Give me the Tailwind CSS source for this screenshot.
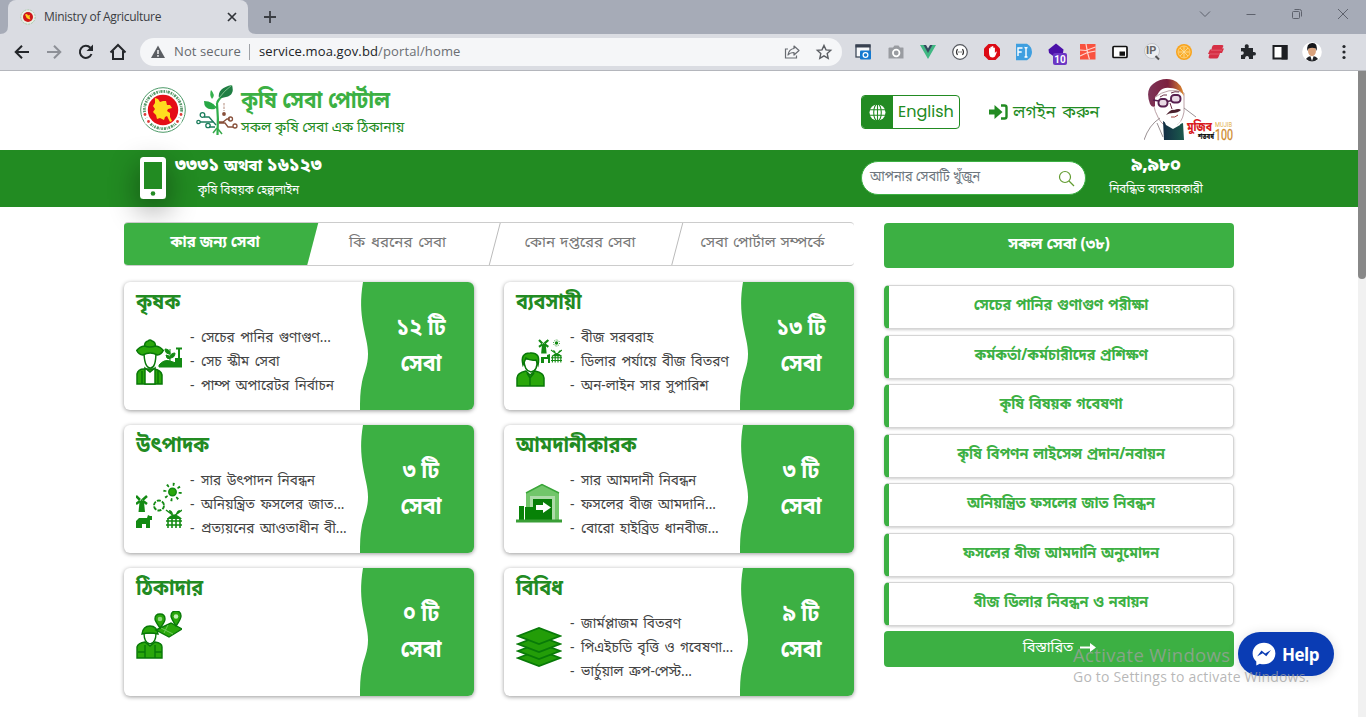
<!DOCTYPE html>
<html lang="bn">
<head>
<meta charset="utf-8">
<title>Ministry of Agriculture</title>
<script src="https://cdn.jsdelivr.net/npm/@tailwindcss/browser@4"></script>
</head>
<body class="w-[1366px] h-[717px] overflow-hidden bg-white font-['Noto_Sans_Bengali','Noto_Serif_Bengali','Open_Sans',sans-serif]">
<div class="relative flex h-[717px] flex-col overflow-hidden">

<!-- browser tab strip -->
<div class="flex h-[34px] shrink-0 items-end bg-[#a6abb7] font-['Open_Sans',sans-serif]">
  <svg class="h-2 w-2 shrink-0" viewBox="0 0 8 8"><path d="M8 0v8H0q8 0 8-8z" fill="#dadce2"/></svg>
  <div class="flex h-[34px] w-[240px] items-center rounded-t-lg bg-[#dadce2] pl-[12px] pr-[9px]">
    <svg class="h-4 w-4" viewBox="0 0 16 16"><circle cx="8" cy="8" r="7.2" fill="#e9efe5" stroke="#a9cba9" stroke-width="1" stroke-dasharray="2 1"/><circle cx="8" cy="8" r="5" fill="#cf1818"/><path d="M5 5.500l2-.5 1 1.500 2-.5-.5 2 1 2.500-2-.6L6.700 9z" fill="#ffd21e"/></svg>
    <span class="ml-2 flex-1 whitespace-nowrap text-[12px] tracking-[-.3px] text-[#3a3d42]">Ministry of Agriculture</span>
    <svg class="h-[14px] w-[14px]" viewBox="0 0 14 14"><path d="M3 3l8 8M11 3l-8 8" stroke="#303338" stroke-width="1.700"/></svg>
  </div>
  <svg class="h-2 w-2 shrink-0" viewBox="0 0 8 8"><path d="M0 0v8h8q-8 0-8-8z" fill="#dadce2"/></svg>
  <svg class="ml-[6px] mb-[9px] h-4 w-4" viewBox="0 0 16 16"><path d="M8 2v12M2 8h12" stroke="#3b3e44" stroke-width="1.800"/></svg>
  <div class="ml-auto flex items-center gap-[30px] self-start pr-[15px] pt-[6px]">
    <svg class="h-4 w-4" viewBox="0 0 16 16"><path d="M3 5.500l5 5 5-5" fill="none" stroke="#5e626d"/></svg>
    <svg class="h-4 w-4" viewBox="0 0 16 16"><path d="M3.500 8.500h9" stroke="#5e626d"/></svg>
    <svg class="h-4 w-4" viewBox="0 0 16 16"><rect x="3.500" y="5.500" width="7" height="7" rx="1" fill="none" stroke="#5e626d"/><path d="M5.500 3.500h5q2 0 2 2v5" fill="none" stroke="#5e626d"/></svg>
    <svg class="h-4 w-4" viewBox="0 0 16 16"><path d="M3 3l10 10M13 3L3 13" stroke="#5e626d"/></svg>
  </div>
</div>

<!-- toolbar -->
<div class="flex h-[37px] shrink-0 items-center border-b border-[#b4b6bc] bg-[#dadce2] pl-3 font-['Open_Sans',sans-serif]">
  <div class="flex gap-3">
    <svg class="h-5 w-5" viewBox="0 0 20 20"><path d="M17 10H4M10 3.700L3.700 10l6.300 6.300" fill="none" stroke="#24272b" stroke-width="2"/></svg>
    <svg class="h-5 w-5" viewBox="0 0 20 20"><path d="M3 10h13M10 3.700l6.300 6.300-6.300 6.300" fill="none" stroke="#8d9097" stroke-width="2"/></svg>
    <svg class="h-5 w-5" viewBox="0 0 20 20"><path d="M15.500 12A6 6 0 1 1 14.300 5.800" fill="none" stroke="#24272b" stroke-width="2"/><path d="M17 2.500V9h-6.500z" fill="#24272b"/></svg>
    <svg class="h-5 w-5" viewBox="0 0 20 20"><path d="M2.500 10.500L10 3l7.500 7.500M5 9v8h10V9" fill="none" stroke="#24272b" stroke-width="2"/></svg>
  </div>
  <div class="ml-3 flex h-[28px] w-[702px] items-center rounded-full bg-[#f5f6f8] pl-[10px] pr-[9px]">
    <svg class="h-4 w-4" viewBox="0 0 16 16"><path d="M8 1.500L15 14H1z" fill="#5a5d62"/><path d="M8 6v4M8 11v1.700" stroke="#fff" stroke-width="1.400"/></svg>
    <span class="ml-2 w-[67px] whitespace-nowrap text-[13px] text-[#66696e] tracking-[.1px]">Not secure</span>
    <span class="ml-[8px] h-4 w-px bg-[#9fa2a7]"></span>
    <span class="ml-[9px] flex-1 whitespace-nowrap text-[13px] tracking-[.13px] text-[#6b6e73]"><span class="text-[#202226]">service.moa.gov.bd</span>/portal/home</span>
    <svg class="h-4 w-4" viewBox="0 0 16 16"><path d="M4 5H1.500v9h11v-2.500" fill="none" stroke="#696c72" stroke-width="1.200"/><path d="M10 2l5 4.500-5 4.500V8.500q-4 0-6 2.500Q5 5 10 4.500z" fill="none" stroke="#696c72" stroke-width="1.200" stroke-linejoin="round"/></svg>
    <svg class="ml-[15px] h-[18px] w-[18px]" viewBox="0 0 18 18"><path d="M9 2.500l2 4.400 4.700.5-3.500 3.200 1 4.700L9 12.900l-4.200 2.400 1-4.700-3.500-3.200 4.700-.5z" fill="none" stroke="#5a5d62" stroke-width="1.400"/></svg>
  </div>
  <div class="ml-[12px] flex items-center gap-[12px]">
    <svg class="h-5 w-5" viewBox="0 0 20 20"><rect x="2" y="3" width="14" height="12" fill="#f7f9fb" stroke="#3f4a5a" stroke-width="1.300"/><path d="M1.500 2.500h15v3h-15z" fill="#384150"/><rect x="6" y="8.500" width="11" height="9" rx="1" fill="#1479d0"/><circle cx="11.500" cy="13" r="2.400" fill="none" stroke="#fff" stroke-width="1.200"/></svg>
    <svg class="h-5 w-5" viewBox="0 0 20 20"><path d="M3.500 5.500H7L8.500 3.500h4L14 5.500h3q.5 0 .5.500v10.500h-15V6z" fill="#999ca1"/><circle cx="10.200" cy="11" r="3.300" fill="none" stroke="#fff" stroke-width="1.700"/></svg>
    <svg class="h-5 w-5" viewBox="0 0 20 20"><path d="M2 3h4l4 7 4-7h4l-8 14z" fill="#41b883"/><path d="M5.500 3H8l2 3.500L12 3h2.500L10 11z" fill="#34495e"/></svg>
    <svg class="h-5 w-5" viewBox="0 0 20 20"><circle cx="10" cy="10" r="7.300" fill="#fff" stroke="#55585e" stroke-width="1.200"/><path d="M7.500 7q-2 3 0 6M12.500 7q2 3 0 6" fill="none" stroke="#333" stroke-width="1.200"/><path d="M8.300 10h3.400" stroke="#333" stroke-width="1.200" stroke-dasharray="1.200 1"/></svg>
    <svg class="h-5 w-5" viewBox="0 0 20 20"><path d="M6.500 2h7L18 6.500v7L13.500 18h-7L2 13.500v-7z" fill="#dc0a14"/><path d="M7 10V6.500q.8-1 1.400 0V9 5q.8-1 1.500 0v4-4.500q.9-.8 1.500 0V9.500 6q.9-.8 1.500 0v5l1.200-1.500q1 0 .6 1L13 14.500q-2 1.500-4.500.5Q7 14 7 10z" fill="#fff"/></svg>
    <svg class="h-5 w-5" viewBox="0 0 20 20"><path d="M2 1.800h11q5 3 5 8.200t-5 8.200H2z" fill="#3f9fe0"/><path d="M4 14V6h4.500M4 10h3.700M10.500 5.500q1.500 0 1.500 1 0-1 1.500-1M12 6.500v7.500M10.500 15q1.500 0 1.500-1 0 1 1.500 1" fill="none" stroke="#fff" stroke-width="1.400"/></svg>
    <div class="relative h-5 w-5">
      <svg class="h-5 w-5" viewBox="0 0 20 20"><path d="M10 1.500l7.500 6L17 11l-7 5-7-5-.5-3.500z" fill="#4a10a8"/></svg>
      <span class="absolute left-[7px] top-[11px] flex h-[12px] w-[14px] items-center justify-center rounded-[2px] bg-[#6b37c4] font-[Roboto] text-[10px] font-bold text-white">10</span>
    </div>
    <svg class="h-5 w-5" viewBox="0 0 20 20"><path d="M2 2h15.500v15.500H2z" fill="#f9523f"/><path d="M2 8l6 .5L17.500 5M8 2l1.500 8.500 8-1.500M2 14l7.500-3.500 2 7" fill="none" stroke="#ffd5cf" stroke-width="1.200"/></svg>
    <svg class="h-5 w-5" viewBox="0 0 20 20"><rect x="3" y="4.500" width="14" height="11" rx="1" fill="#fff" stroke="#111" stroke-width="1.700"/><path d="M9.500 9.500h5.500v4.300H9.500z" fill="#111"/></svg>
    <div class="relative h-5 w-5">
      <svg class="h-5 w-5" viewBox="0 0 20 20"><circle cx="10" cy="9" r="7.500" fill="#eceef1" stroke="#c1c4c9"/><path d="M13.500 14l3.500 3.500" stroke="#555" stroke-width="2"/></svg>
      <span class="absolute left-[4px] top-[2px] font-[Roboto] text-[11px] leading-[14px] font-bold text-[#666]">IP</span>
    </div>
    <svg class="h-5 w-5" viewBox="0 0 20 20"><circle cx="10" cy="10" r="8" fill="#f8a31b"/><circle cx="10" cy="10" r="6" fill="#fbae2b" stroke="#fdd78e" stroke-width=".8"/><path d="M10 4.500v11M4.500 10h11M6 6l8 8M14 6l-8 8" stroke="#fde0a2" stroke-width=".8"/></svg>
    <svg class="h-5 w-5" viewBox="0 0 20 20"><path d="M8 3h8q2 0 1 2l-.8 1.500H18L16 11h-2l-1.500 4q-.6 1.500-2 1.500H4q-2 0-1.300-2L3.500 12H2l2-4.500h1.500L6 5q.7-2 2-2z" fill="#d63045"/><path d="M5 8.200h11M4 12h10" stroke="#e8707e" stroke-width=".7"/></svg>
    <svg class="h-5 w-5" viewBox="0 0 20 20"><path d="M3 6h4q-1-3.500 1.700-3.700Q11.500 2.500 10.500 6H15v4q3-.5 3 1.700T15 13.500V17h-4q.2-3-1.900-3T7 17H3v-4q2.800.2 2.800-2T3 9.500z" fill="#24272b"/></svg>
    <svg class="h-5 w-5" viewBox="0 0 20 20"><rect x="3.500" y="4" width="13" height="12.500" fill="#fff" stroke="#1c1e22" stroke-width="2"/><path d="M11.500 3h6v14.500h-6z" fill="#1c1e22"/></svg>
    <svg class="h-5 w-5" viewBox="0 0 20 20"><circle cx="10" cy="10" r="9.800" fill="#fff"/><path d="M4 17q2-3 6-3t6 3q-6 5-12 0z" fill="#22242a"/><path d="M8 13h4l-2 6z" fill="#fff"/><ellipse cx="10" cy="8.800" rx="4" ry="5.400" fill="#d9a27d"/><path d="M5.500 9Q4 1.500 10 1t4.500 8L13.500 6.300Q10 5 6.500 6.500z" fill="#15161a"/></svg>
    <svg class="h-5 w-5" viewBox="0 0 20 20"><circle cx="10" cy="4.500" r="1.600" fill="#24272b"/><circle cx="10" cy="10" r="1.600" fill="#24272b"/><circle cx="10" cy="15.500" r="1.600" fill="#24272b"/></svg>
  </div>
</div>

<div class="flex min-h-0 flex-1">
<div class="flex w-[1358px] shrink-0 flex-col">

  <!-- site header -->
  <header class="flex h-[79px] shrink-0 pl-[140px] text-[#228b22]">
    <svg class="mt-[16px] h-[46px] w-[46px]" viewBox="0 0 46 46"><circle cx="23" cy="23" r="22.300" fill="#fff" stroke="#4d9a68" stroke-width="1"/><circle cx="23" cy="23" r="18.600" fill="none" stroke="#5b9a6c" stroke-width="2.800" stroke-dasharray="1.600 .9 .8 .8 2.200 1"/><g fill="#fff"><circle cx="5" cy="28" r="3"/><circle cx="8" cy="34" r="3.500"/><circle cx="41" cy="28" r="3"/><circle cx="38" cy="34" r="3.500"/></g><circle cx="23" cy="23" r="15.200" fill="#e50d16"/><path d="M15 11l3 1 2 3 3-1 3 0 1 4 3 0 2 3-4 1-1 2 3 2 0 4 2 4-2 1-3-6-2 1-1 3-4-2-3 1-1-4-3-3 2-3-2-3 2-3z" fill="#ffdc1f"/><g fill="#dd3b38"><circle cx="5" cy="27.500" r="1.400"/><circle cx="8.500" cy="34.500" r="1.400"/><circle cx="41" cy="27.500" r="1.400"/><circle cx="37.500" cy="34.500" r="1.400"/></g></svg>
    <svg class="ml-[10px] mt-[14px] h-[52px] w-[42px]" viewBox="0 0 42 52"><path d="M21.500 50q1-17-.5-32M21 18q2-5 8-9M21 23q-3-1-5-4" fill="none" stroke="#2fae4a" stroke-width="2.200"/><path d="M23 13Q21 3 36 0q3 10-6 12-3 1-7 1z" fill="#1f7e43"/><path d="M23 13Q28 6 36 0" stroke="#a5dba8" stroke-width=".7" fill="none"/><path d="M19 24Q8 26 8 16q10 0 11 8z" fill="#27a745"/><path d="M16 14q-3-4-1-9 5 5 1 9z" fill="#35b14d"/><g fill="none" stroke="#1c7d5c" stroke-width="1.300"><path d="M20 40l-7-8H8M18 37H4M19 42h-6"/><circle cx="6.500" cy="30" r="2.300"/><circle cx="2.500" cy="37" r="1.700"/><circle cx="12" cy="40.500" r="2.200"/></g><g fill="none" stroke="#88503a" stroke-width="1.300"><path d="M23 37h4l4-3h3M23 38h6l3 4h5"/><circle cx="34.500" cy="34" r="2"/><circle cx="39" cy="41" r="2"/></g><circle cx="28" cy="29" r="1.900" fill="#88503a"/><path d="M28 18v8" stroke="#cdb3a8" stroke-width="1.500" stroke-dasharray="2.500 1" fill="none"/><path d="M21 43l-4 5M22 44l4 5" stroke="#38a84a" stroke-width="1.500"/></svg>
    <div class="ml-[3px] w-[200px] pt-[15px]">
      <div class="h-[32px] origin-left scale-x-[.87] whitespace-nowrap text-[24px] leading-[32px] font-bold text-[#3cb043]">কৃষি সেবা পোর্টাল</div>
      <div class="h-[22px] whitespace-nowrap text-[14px] leading-[22px] text-[#228b22]">সকল কৃষি সেবা এক ঠিকানায়</div>
    </div>
    <div class="ml-[420px] mt-[24px] flex h-[34px] w-[99px] items-center overflow-hidden rounded-[4px] border border-[#228b22]">
      <div class="flex h-full w-[31px] items-center justify-center bg-[#228b22]"><svg class="h-[17px] w-[17px]" viewBox="0 0 17 17"><circle cx="8.500" cy="8.500" r="8" fill="#fff"/><g fill="none" stroke="#228b22" stroke-width="1.100"><path d="M0 5.700h17M0 11.300h17M8.500 0v17"/><ellipse cx="8.500" cy="8.500" rx="3.800" ry="8.500"/></g></svg></div>
      <span class="ml-[5px] font-['Poppins','Inter'] text-[16px] text-[#228b22]">English</span>
    </div>
    <div class="ml-[29px] mt-[30px] flex h-[26px] w-[155px] gap-[5px]">
      <svg class="mt-[3px] h-[16px] w-[19px]" viewBox="0 0 19 16"><path d="M0 5.500h5.500V1l8 7-8 7v-4.500H0z" fill="#228b22"/><path d="M12 1.500h3.500q2 0 2 2v9q0 2-2 2H12" fill="none" stroke="#228b22" stroke-width="2.400"/></svg>
      <span class="whitespace-nowrap text-[17px] leading-[26px] [word-spacing:2px]">লগইন করুন</span>
    </div>
    <svg class="mt-[7px] h-[63px] w-[90px]" viewBox="0 0 90 63"><defs><linearGradient id="hair"><stop stop-color="#7d3558"/><stop offset=".55" stop-color="#7c1f3e"/><stop offset="1" stop-color="#e08a2c"/></linearGradient><linearGradient id="suit"><stop stop-color="#122c44"/><stop offset="1" stop-color="#1b5b4c"/></linearGradient></defs><path d="M10 20Q9 30 13 37q3 8 9 11l9 1q7-4 9-15V15Q25 8 10 20z" fill="#fff" stroke="#a98a90" stroke-width=".8"/><path d="M6 26Q1 12 9 6 18-1 29 2q9 3 11 16l-3-4q-5-4-11-4-7-1-11 4-2 4-4 5l0 9q-3 2-5-2z" fill="url(#hair)"/><g fill="#e9dbe6" stroke="#571f4f" stroke-width="1.900"><rect x="14.500" y="21" width="9" height="7.500" rx="3.300"/><rect x="27" y="17" width="9.500" height="7.500" rx="3.300"/></g><path d="M23.500 23.500l4-1M9 22l6 1" stroke="#571f4f" stroke-width="1.500"/><path d="M16 19q4-3 7-2M27 15q4-2 8-1M26 25l2 6" fill="none" stroke="#6d3348" stroke-width="1"/><path d="M22 37q5-6 8-5 5-2 7 0-3 3-8 3-4 0-7 2z" fill="#4b1f2c"/><path d="M27 39q4 1 7-2" fill="none" stroke="#a4413d"/><path d="M19 43l9 6 11-4 1 17H20z" fill="url(#suit)"/><path d="M19 40l3 7 7 4 7-4 2-5-5 5h-6z" fill="#fff"/><path d="M16 40Q5 47 0 62M13 45l6 14M40 30l12 9" fill="none" stroke="#8e8488" stroke-width=".9"/><text x="43" y="53" font-size="12" font-weight="800" fill="#d91b20" textLength="25" lengthAdjust="spacingAndGlyphs">মুজিব</text><text x="54" y="61" font-size="7" font-weight="800" fill="#111" textLength="16" lengthAdjust="spacingAndGlyphs">শতবর্ষ</text><text x="71" y="49" font-family="Roboto" font-size="8" fill="#e3b04b" textLength="17" lengthAdjust="spacingAndGlyphs">MUJIB</text><text x="71" y="61.500" font-family="Roboto" font-size="14" fill="#cf8a2c" stroke="#cf8a2c" stroke-width=".3" textLength="18" lengthAdjust="spacingAndGlyphs">100</text></svg>
  </header>

  <!-- helpline bar -->
  <div class="flex h-[57px] shrink-0 bg-[#228b22] pl-[140px] text-white">
    <div class="mt-[7px] h-[42px] w-[26px] shadow-[0_10px_30px_rgba(0,0,0,.45)]"><svg class="h-[42px] w-[26px]" viewBox="0 0 26 42"><rect width="26" height="42" rx="3.500" fill="#fff"/><rect x="4" y="5" width="18" height="27" fill="#228b22"/><circle cx="13" cy="36.500" r="2.300" fill="#228b22"/></svg></div>
    <div class="ml-[9px] w-[147px] text-center">
      <div class="h-[29px] whitespace-nowrap text-[18px] leading-[32px] font-extrabold">৩৩৩১ <span class="text-[15px]">অথবা</span> ১৬১২৩</div>
      <div class="h-[24px] scale-x-[.88] whitespace-nowrap text-[13px] leading-[24px]">কৃষি বিষয়ক হেল্পলাইন</div>
    </div>
    <div class="ml-[539px] mt-[11px] flex h-[34px] w-[225px] items-center rounded-full border border-[#3cb043] bg-white pl-[8px] pr-[10px] text-[#6c757d]">
      <span class="flex-1 origin-left scale-x-[.91] whitespace-nowrap text-[14px] leading-[24px]">আপনার সেবাটি খুঁজুন</span>
      <svg class="h-[17px] w-[17px]" viewBox="0 0 17 17"><circle cx="7" cy="7" r="5.500" fill="none" stroke="#629c31" stroke-width="1.200"/><path d="M11 11l5 5" stroke="#629c31" stroke-width="1.200"/></svg>
    </div>
    <div class="ml-[10px] flex w-[120px] flex-col items-center">
      <div class="h-[29px] whitespace-nowrap text-[18px] leading-[32px] font-extrabold">৯,৯৮০</div>
      <div class="h-[22px] scale-x-[.88] whitespace-nowrap text-[13px] leading-[22px]">নিবন্ধিত ব্যবহারকারী</div>
    </div>
  </div>

  <!-- page content -->
  <main class="flex flex-1 gap-[30px] pl-[124px] pt-[15px]">
    <section class="w-[730px]">
      <nav class="relative flex h-[44px] overflow-hidden rounded-[4px] border-y border-[#ccc] text-[15px] leading-[40px] text-[#777]">
        <svg class="absolute left-0 top-[-1px] h-[44px] w-[730px]" viewBox="0 0 730 44"><path d="M0 0h194.500L183 44H0z" fill="#3cb043"/><path d="M376.500 0L365 44M559 0l-11.500 44" stroke="#bbb" fill="none"/></svg>
        <span class="relative w-[182px] text-center font-bold text-white">কার জন্য সেবা</span>
        <span class="relative w-[183px] text-center [word-spacing:2px]">কি ধরনের সেবা</span>
        <span class="relative w-[182px] text-center [word-spacing:1px]">কোন দপ্তরের সেবা</span>
        <span class="relative w-[183px] text-center [word-spacing:1px]">সেবা পোর্টাল সম্পর্কে</span>
      </nav>
      <div id="cards" class="mt-[16px] grid grid-cols-[350px_350px] gap-x-[30px] gap-y-[15px]"></div>
    </section>
    <aside class="w-[350px] pt-px">
      <div class="h-[45px] rounded-[4px] bg-[#3cb043] text-center text-[15.5px] leading-[45px] font-bold text-white">সকল সেবা (৩৮)</div>
      <div id="links" class="mt-[17px] flex flex-col gap-[5.500px]"></div>
      <div class="mt-[5px] flex h-[36px] justify-center gap-[5px] rounded-[4px] bg-[#3cb043] text-[15px] leading-[34px] text-white"><span class="scale-x-[.97]">বিস্তারিত</span> <svg class="mt-[11px] h-[11px] w-[16px]" viewBox="0 0 16 11"><path d="M0 5.500h12" stroke="#fff" stroke-width="2"/><path d="M10 1l6 4.500-6 4.500z" fill="#fff"/></svg></div>
    </aside>
  </main>
</div>
<div class="w-[8px] bg-[#f1f1f1]"><div class="h-[208px] w-[8px] rounded-b-full bg-[#888]"></div></div>
</div>

<!-- overlays -->
<div class="absolute left-[1238px] top-[632px] flex h-[44px] w-[96px] items-center rounded-full bg-[#0a3cb4] pl-[14px] shadow-[0_2px_12px_rgba(0,0,0,.15)]">
  <svg class="h-[24px] w-[24px]" viewBox="0 0 24 24"><path d="M12 .8C5.500.8.600 5.500.600 11.600c0 3.300 1.400 6 3.700 7.900V23.500l3.500-1.800c1.300.4 2.700.6 4.200.6 6.500 0 11.400-4.700 11.400-10.800S18.500.8 12 .8z" fill="#fff"/><path d="M5 14.500l4.500-6 3.700 3L19 8l-4.700 6.200-3.600-2.900z" fill="#0a3cb4"/></svg>
  <span class="ml-[6px] mt-[2px] font-['Open_Sans'] text-[17px] leading-6 font-bold tracking-[-.5px] text-white">Help</span>
</div>
<div class="absolute left-[1073px] top-[642px] whitespace-nowrap font-['Open_Sans'] text-[#a0a0a0]/75">
  <div class="text-[18.5px] leading-[25px] tracking-[.35px]">Activate Windows</div>
  <div class="text-[14px] leading-[20px] tracking-[.2px]">Go to Settings to activate Windows.</div>
</div>
</div>

<script>
const windmill = '<path d="M0 0l4 4M11 0L6.500 4M0 8l4-3M11 8L7 5" stroke="#138a13" stroke-width="2.500"/><path d="M3.500 6L5.500 3 8 6l1 10H2.500z" fill="#138a13"/>';
const fence = '<path d="M1 9q7-9 15 0zM3 0q3 0 4 4-4 0-4-4zM14 0q-3 0-4 4 4 0 4-4z" fill="#138a13"/><path d="M0 0l4 3 4 3 4-3 4-3" fill="none" stroke="#138a13" stroke-width="1.500"/><path d="M2 8v10M6 8v10M10 8v10M14 8v10M0 11h16M0 15h16" stroke="#138a13" stroke-width="1.600"/>';
const icons = {
  farmer: '<g fill="#2aa70b" stroke="#087808" stroke-width="1.500"><path d="M1 45V35q1-5 7-5h10q7 1 8 6v9z"/><path d="M9 29l5 4 5-4v16H9z" fill="#fff"/><path d="M8 12q0 16 6 17t6-17z" fill="#fff"/><path d="M.7 11.500q3-4 7.800-4.500 0-4 3.500-5 2-2 4 0 3.500 1 3.500 5 4.800.500 7.800 4.500-2 4-6 4.500-7-4-14.500 0-4-.5-6.100-4.500z"/><path d="M8.500 7q5 2 11 0" fill="none"/><path d="M6 32v13M22 32v13" fill="none"/></g><path d="M23 26q5-6 11-4l12 4v2H23zM34 23V10M34 15q-5 0-5-5 5 0 5 5zm0 4q5 0 5-5-5 0-5 5zm0 1q-4 0-4-4 4 0 4 4z" fill="#138a13" stroke="#138a13"/><path d="M39 19h7v8h-7zM40 8.500h6v2h-2v9h-2v-9h-2z" fill="#138a13"/>',
  trader: '<g fill="#2aa70b" stroke="#087808" stroke-width="1.500"><path d="M1 47V39q0-5 9-7l4 4 5-4q9 2 9 7v8z"/><path d="M8 20h13q1 12-6 13-7-1-7-13z" fill="#fff"/><path d="M7 26q-3-12 7-12 11-1 8 12l-2-5q-6 1-10-2z"/><path d="M11 34l3 5 4-5M14 38v9" fill="none"/></g><g transform="translate(23 1) scale(.85)">'+windmill+'</g><g transform="translate(35 11) scale(.7)">'+fence+'</g><path d="M25 24V18h6v-2l3-1v9h-2v-4h-4v4z" fill="#138a13"/><circle cx="40.500" cy="4" r="1.700" fill="#138a13"/><circle cx="40.500" cy="4" r="3" fill="none" stroke="#138a13" stroke-dasharray="1 1.300"/>',
  producer: '<g transform="translate(0 14)">'+windmill+'</g><g transform="translate(30 28)">'+fence+'</g><circle cx="36.500" cy="10" r="3.700" fill="#2aa70b" stroke="#138a13" stroke-width="1.500"/><circle cx="36.500" cy="10" r="7.700" fill="none" stroke="#138a13" stroke-width="3" stroke-dasharray="1.800 4.250"/><circle cx="23" cy="23.500" r="5" fill="none" stroke="#138a13" stroke-width="1.900" stroke-dasharray="4 1.200"/><path d="M0 46v-7l3-3h8l1-3 2 1h2v4h-2v8h-4v-4H6v4z" fill="#138a13"/>',
  importer: '<path d="M10 40V11L26 2l17 9v29z" fill="#72c66a"/><path d="M10 11L26 2.500l17 8.500" fill="none" stroke="#3ba63a" stroke-width="1.500"/><path d="M14 40V14h25v26" fill="#aedba9"/><path d="M17 17h19v23H17z" fill="#087d08"/><path d="M3 24h5v16H3zM9 25h15v15H9z" fill="#078207"/><path d="M20 23h7v-3l8 5.500-8 5.500v-3h-7z" fill="#fff"/><path d="M0 37.500h46v3H0z" fill="#399e36"/>',
  contractor: '<g fill="#2aa70b" stroke="#087808" stroke-width="1.400"><path d="M1 47V36q1-4 8-5l5 4 5-4q7 1 7 5v11z"/><path d="M8 22h12q0 10-6 11-6-1-6-11z" fill="#fff"/><path d="M6 23q1-8 8-8t8 8q-8-2-16 0z"/><path d="M9 34v13M19 34v13M2 41h7M19 41h7"/><path d="M20 19l15-7 11 6-13 8z"/><path d="M25 17l12 6M32 14l-4 8" stroke="#6cc95a" stroke-width="1"/><path d="M24 17q-5-7-5-9 0-5 5-5t5 5q0 3-5 9zM40 15q-5-8-5-10 0-5 5-5t5 5q0 3-5 10z"/></g><circle cx="24" cy="8" r="2.300" fill="#8fd67e"/><circle cx="40" cy="5.500" r="2.300" fill="#c4efb8"/>',
  layers: '<g fill="#239d08" stroke="#087a08" stroke-width="1.800"><path d="M2 33l21-8 21 8-21 8z"/><path d="M2 26l21-8 21 8-21 8z"/><path d="M2 19l21-8 21 8-21 8z"/><path d="M2 11l21-8 21 8-21 8z"/></g>'
};
const cards = [
  ['কৃষক','১২ টি','farmer',['সেচের পানির গুণাগুণ...','সেচ স্কীম সেবা','পাম্প অপারেটর নির্বাচন']],
  ['ব্যবসায়ী','১৩ টি','trader',['বীজ সরবরাহ','ডিলার পর্যায়ে বীজ বিতরণ','অন-লাইন সার সুপারিশ']],
  ['উৎপাদক','৩ টি','producer',['সার উৎপাদন নিবন্ধন','অনিয়ন্ত্রিত ফসলের জাত...','প্রত্যয়নের আওতাধীন বী...']],
  ['আমদানীকারক','৩ টি','importer',['সার আমদানী নিবন্ধন','ফসলের বীজ আমদানি...','বোরো হাইব্রিড ধানবীজ...']],
  ['ঠিকাদার','০ টি','contractor',[]],
  ['বিবিধ','৯ টি','layers',['জার্মপ্লাজম বিতরণ','পিএইচডি বৃত্তি ও গবেষণা...','ভার্চুয়াল ক্রপ-পেস্ট...']]
];
document.getElementById('cards').innerHTML = cards.map(([t,n,i,l]) => `
<article class="relative flex h-[128px] overflow-hidden rounded-[6px] bg-white shadow-[0_1px_4px_rgba(0,0,0,.4)]">
  <div class="w-[236px] pl-[12px]">
    <h3 class="h-[43px] origin-left scale-x-[.9] whitespace-nowrap text-[22px] leading-[43px] font-bold text-[#228b22]">${t}</h3>
    <div class="flex gap-[8px]">
      <svg class="${l.length ? 'mt-[14px]' : 'mt-0'} h-[48px] w-[46px] shrink-0" viewBox="0 0 46 48">${icons[i]}</svg>
      <ul class="whitespace-nowrap pt-[2px] text-[14px] leading-[24px] text-[#444]">${l.map(x => `<li class="flex"><span class="w-[11px]">-</span><span class="origin-left scale-x-[.97] [word-spacing:2px]">${x}</span></li>`).join('')}</ul>
    </div>
  </div>
  <div class="relative w-[114px]">
    <svg class="absolute inset-0 h-[128px] w-[114px]" viewBox="0 0 114 128"><path d="M3 0C0 18 1 30 3 42 5 54 8 62 8 72 8 84 4 90 2 100 0 110 0 118 0 128H114V0z" fill="#3cb043"/></svg>
    <div class="relative scale-x-[.89] pl-[9px] pt-[29px] text-center text-[24px] leading-[36px] font-bold text-white">${n}<br>সেবা</div>
  </div>
</article>`).join('');
document.getElementById('links').innerHTML = ['সেচের পানির গুণাগুণ পরীক্ষা','কর্মকর্তা/কর্মচারীদের প্রশিক্ষণ','কৃষি বিষয়ক গবেষণা','কৃষি বিপণন লাইসেন্স প্রদান/নবায়ন','অনিয়ন্ত্রিত ফসলের জাত নিবন্ধন','ফসলের বীজ আমদানি অনুমোদন','বীজ ডিলার নিবন্ধন ও নবায়ন'].map(x => `<div class="h-[44px] rounded-[5px] border border-l-[5px] border-[#d5d5d5] border-l-[#3cb043] bg-white text-center text-[15px] leading-[41px] font-bold text-[#3cb043] shadow-[0_1px_3px_rgba(0,0,0,.2)]"><span class="inline-block scale-x-[.96] [word-spacing:1px]">${x}</span></div>`).join('');
</script>
</body>
</html>
